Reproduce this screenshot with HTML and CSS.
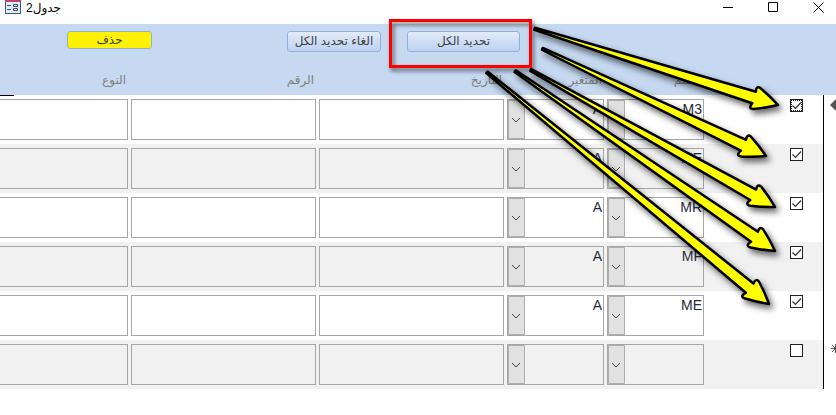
FILE: index.html
```html
<!DOCTYPE html>
<html lang="ar">
<head>
    <meta charset="UTF-8">
    <meta name="viewport" content="width=device-width, initial-scale=1.0">
    <title>جدول2</title>
    <link rel="stylesheet" href="styles.css">
</head>
<body>
    <header class="titlebar">
        <svg class="form-icon" width="16" height="14" viewBox="0 0 16 14">
            <rect x="0" y="0" width="16" height="14" fill="#41597f"/>
            <rect x="1" y="1" width="14" height="12" fill="#e4ebf8"/>
            <rect x="0" y="0" width="16" height="2" fill="#b8476b"/>
            <path d="M2 5.500h4M2 9.500h4" stroke="#41597f"/>
            <path d="M8.500 4.500h4v2h-4zM8.500 8.500h4v2h-4z" fill="#fff" stroke="#41597f"/>
        </svg>
        <h1 class="title">جدول2</h1>
        <button class="win-btn" aria-label="تصغير"><svg width="11" height="11"><path d="M0 5.500h10" stroke="#000"/></svg></button>
        <button class="win-btn" aria-label="تكبير"><svg width="11" height="11"><path d="M.5.5h9v9h-9z" fill="none" stroke="#000"/></svg></button>
        <button class="win-btn" aria-label="إغلاق"><svg width="11" height="11"><path d="M.5.5l10 10M10.500.5l-10 10" stroke="#000"/></svg></button>
    </header>

    <main dir="rtl">
        <div class="toolbar">
            <button class="btn btn-select">تحديد الكل</button>
            <button class="btn btn-clear">الغاء تحديد الكل</button>
            <button class="btn btn-delete">حذف</button>
        </div>
        <table class="records">
            <colgroup>
                <col class="col-mark">
                <col class="col-check">
                <col class="col-combo">
                <col class="col-combo">
                <col class="col-text">
                <col class="col-text">
                <col>
            </colgroup>
            <thead>
                <tr>
                    <th></th>
                    <th></th>
                    <th id="h-name">الاسم</th>
                    <th id="h-var">المتغير</th>
                    <th id="h-date">التاريخ</th>
                    <th id="h-num">الرقم</th>
                    <th id="h-type">النوع</th>
                </tr>
            </thead>
            <tbody>
                <tr>
                    <td class="mark"><svg width="12" height="14"><path d="M6 7l6-6v12z" fill="#555"/></svg></td>
                    <td class="check"><input type="checkbox" class="current" aria-label="تحديد" checked></td>
                    <td><select aria-labelledby="h-name"><option>M3</option></select></td>
                    <td><select aria-labelledby="h-var"><option>A</option></select></td>
                    <td><input type="text" aria-labelledby="h-date"></td>
                    <td><input type="text" aria-labelledby="h-num"></td>
                    <td><input type="text" aria-labelledby="h-type"></td>
                </tr>
                <tr>
                    <td class="mark"></td>
                    <td class="check"><input type="checkbox" aria-label="تحديد" checked></td>
                    <td><select aria-labelledby="h-name"><option>ME</option></select></td>
                    <td><select aria-labelledby="h-var"><option>A</option></select></td>
                    <td><input type="text" aria-labelledby="h-date"></td>
                    <td><input type="text" aria-labelledby="h-num"></td>
                    <td><input type="text" aria-labelledby="h-type"></td>
                </tr>
                <tr>
                    <td class="mark"></td>
                    <td class="check"><input type="checkbox" aria-label="تحديد" checked></td>
                    <td><select aria-labelledby="h-name"><option>MR</option></select></td>
                    <td><select aria-labelledby="h-var"><option>A</option></select></td>
                    <td><input type="text" aria-labelledby="h-date"></td>
                    <td><input type="text" aria-labelledby="h-num"></td>
                    <td><input type="text" aria-labelledby="h-type"></td>
                </tr>
                <tr>
                    <td class="mark"></td>
                    <td class="check"><input type="checkbox" aria-label="تحديد" checked></td>
                    <td><select aria-labelledby="h-name"><option>MF</option></select></td>
                    <td><select aria-labelledby="h-var"><option>A</option></select></td>
                    <td><input type="text" aria-labelledby="h-date"></td>
                    <td><input type="text" aria-labelledby="h-num"></td>
                    <td><input type="text" aria-labelledby="h-type"></td>
                </tr>
                <tr>
                    <td class="mark"></td>
                    <td class="check"><input type="checkbox" aria-label="تحديد" checked></td>
                    <td><select aria-labelledby="h-name"><option>ME</option></select></td>
                    <td><select aria-labelledby="h-var"><option>A</option></select></td>
                    <td><input type="text" aria-labelledby="h-date"></td>
                    <td><input type="text" aria-labelledby="h-num"></td>
                    <td><input type="text" aria-labelledby="h-type"></td>
                </tr>
                <tr>
                    <td class="mark"><svg width="12" height="10"><path d="M7 5.500h5M11.500 1v9M8 2l7 7M8 9l7-7" stroke="#555"/></svg></td>
                    <td class="check"><input type="checkbox" aria-label="تحديد"></td>
                    <td><select aria-labelledby="h-name"><option></option></select></td>
                    <td><select aria-labelledby="h-var"><option></option></select></td>
                    <td><input type="text" aria-labelledby="h-date"></td>
                    <td><input type="text" aria-labelledby="h-num"></td>
                    <td><input type="text" aria-labelledby="h-type"></td>
                </tr>
            </tbody>
        </table>
    </main>

    <!-- highlight box and arrows pointing at the tick boxes -->
    <svg class="notes" width="836" height="415" viewBox="0 0 836 415" aria-hidden="true">
        <rect class="box" x="390.500" y="20.500" width="140" height="46"/>
        <g class="arrow">
            <path transform="translate(778 105) rotate(17.400)" d="M0 0Q-10-6-22-11Q-27-12-25-6L-255-1V1L-25 6Q-28 13-22 11Q-10 6 0 0z"/>
            <path transform="translate(766 156) rotate(25.600)" d="M0 0Q-10-6-22-11Q-27-12-25-6L-248-1V1L-25 6Q-28 13-22 11Q-10 6 0 0z"/>
            <path transform="translate(775 207) rotate(29.300)" d="M0 0Q-10-6-22-11Q-27-12-25-6L-280-1V1L-25 6Q-28 13-22 11Q-10 6 0 0z"/>
            <path transform="translate(775 251) rotate(34.700)" d="M0 0Q-10-6-22-11Q-27-12-25-6L-316-1V1L-25 6Q-28 13-22 11Q-10 6 0 0z"/>
            <path transform="translate(769 304) rotate(39.400)" d="M0 0Q-10-6-22-11Q-27-12-25-6L-365-1V1L-25 6Q-28 13-22 11Q-10 6 0 0z"/>
        </g>
    </svg>
</body>
</html>
```
FILE: styles.css
```css
* {
    box-sizing: border-box;
}
body {
    margin: 0;
    position: relative;
    overflow-x: hidden;
    background-color: #fff;
    font-family: "Liberation Sans", "DejaVu Sans", sans-serif;
}
.titlebar {
    display: flex;
    align-items: flex-start;
    height: 24px;
    padding: 0 12px 0 5px;
}
.title {
    flex: 1;
    margin: 0 5px;
    font-size: 12px;
    line-height: 16px;
    font-weight: normal;
    color: #000;
}
.win-btn {
    display: flex;
    margin-left: 34px;
    padding: 2px 0 0;
    border: 0;
    background: none;
}
.toolbar {
    display: flex;
    align-items: flex-start;
    height: 44px;
    padding: 7px 316px 0 0;
    background-color: #c6d9f1;
}
.btn {
    height: 21px;
    padding: 0;
    border: 1px solid #8fb0dc;
    border-radius: 3px;
    background-image: linear-gradient(#e2ebf9, #bdd1f0);
    font-family: inherit;
    font-size: 12px;
    line-height: 17px;
    color: #404040;
}
.btn-select {
    width: 113px;
}
.btn-clear {
    width: 94px;
    margin-right: 26px;
}
.btn-delete {
    width: 85px;
    height: 18px;
    margin-right: 135px;
    background: #fff200;
    line-height: 15px;
}
.records {
    width: 100%;
    table-layout: fixed;
    border-spacing: 0;
}
/* start of the rule under the header */
.records::after {
    content: "";
    position: absolute;
    top: 95px;
    left: 0;
    width: 14px;
    height: 1px;
    background-color: #000;
}
.col-mark {
    width: 13px;
}
.col-check {
    width: 116px;
}
.col-combo {
    width: 100px;
}
.col-text {
    width: 188px;
}
th {
    height: 27px;
    padding: 0 5px 4px 0;
    background-color: #c6d9f1;
    font-size: 12px;
    line-height: 20px;
    font-weight: normal;
    text-align: right;
    color: #7f7f7f;
}
td {
    height: 49px;
    padding: 4px 3px 4px 0;
    vertical-align: top;
}
tbody tr:nth-child(even) {
    background-color: #f1f1f1;
}
td.mark {
    padding: 3px 0 0;
    border-left: 1px solid #000;
    background-color: #fff;
}
td.check {
    padding: 4px 20px 0 0;
}
.mark svg,
td input,
td select {
    display: block;
}
input[type="text"],
select {
    appearance: none;
    width: 100%;
    height: 41px;
    margin: 0;
    border: 1px solid #a6a6a6;
    border-radius: 0;
    background-color: transparent;
    font-family: inherit;
    font-size: 14px;
    color: #262b38;
}
td:last-child input {
    border-left: 0;
}
select {
    padding: 0 1px 22px 0;
    background-image:
        url("data:image/svg+xml,%3Csvg xmlns='http://www.w3.org/2000/svg' width='18' height='39'%3E%3Cpath d='M.5.5h16v38H.5z' fill='%23e1e1e1' stroke='%23adadad'/%3E%3Cpath d='M4 18l4 4 4-4' fill='none' stroke='%23444'/%3E%3C/svg%3E");
    background-repeat: no-repeat;
    background-position: left top;
}
input[type="checkbox"] {
    appearance: none;
    width: 13px;
    height: 13px;
    margin: 0;
    border: 1px solid #222;
    background-color: #fff;
}
input[type="checkbox"]:checked {
    background-image: url("data:image/svg+xml,%3Csvg xmlns='http://www.w3.org/2000/svg' width='11' height='11'%3E%3Cpath d='M1.500 5.500l3 3 5.500-6' fill='none' stroke='%23333' stroke-width='1.200'/%3E%3C/svg%3E");
}
input.current {
    outline: 1px dotted #222;
    outline-offset: -2px;
}
.notes {
    position: absolute;
    top: 0;
    right: 0;
    pointer-events: none;
}
.notes .box {
    fill: none;
    stroke: #f00;
    stroke-width: 3;
    filter: drop-shadow(2px 3px 2px rgba(0, 0, 0, 0.6));
}
.notes .arrow path {
    fill: #ff0;
    stroke: #000;
    stroke-width: 2.5;
    stroke-linejoin: round;
}
.notes .arrow {
    filter: drop-shadow(3px 4px 3px rgba(0, 0, 0, 0.6));
}
```
